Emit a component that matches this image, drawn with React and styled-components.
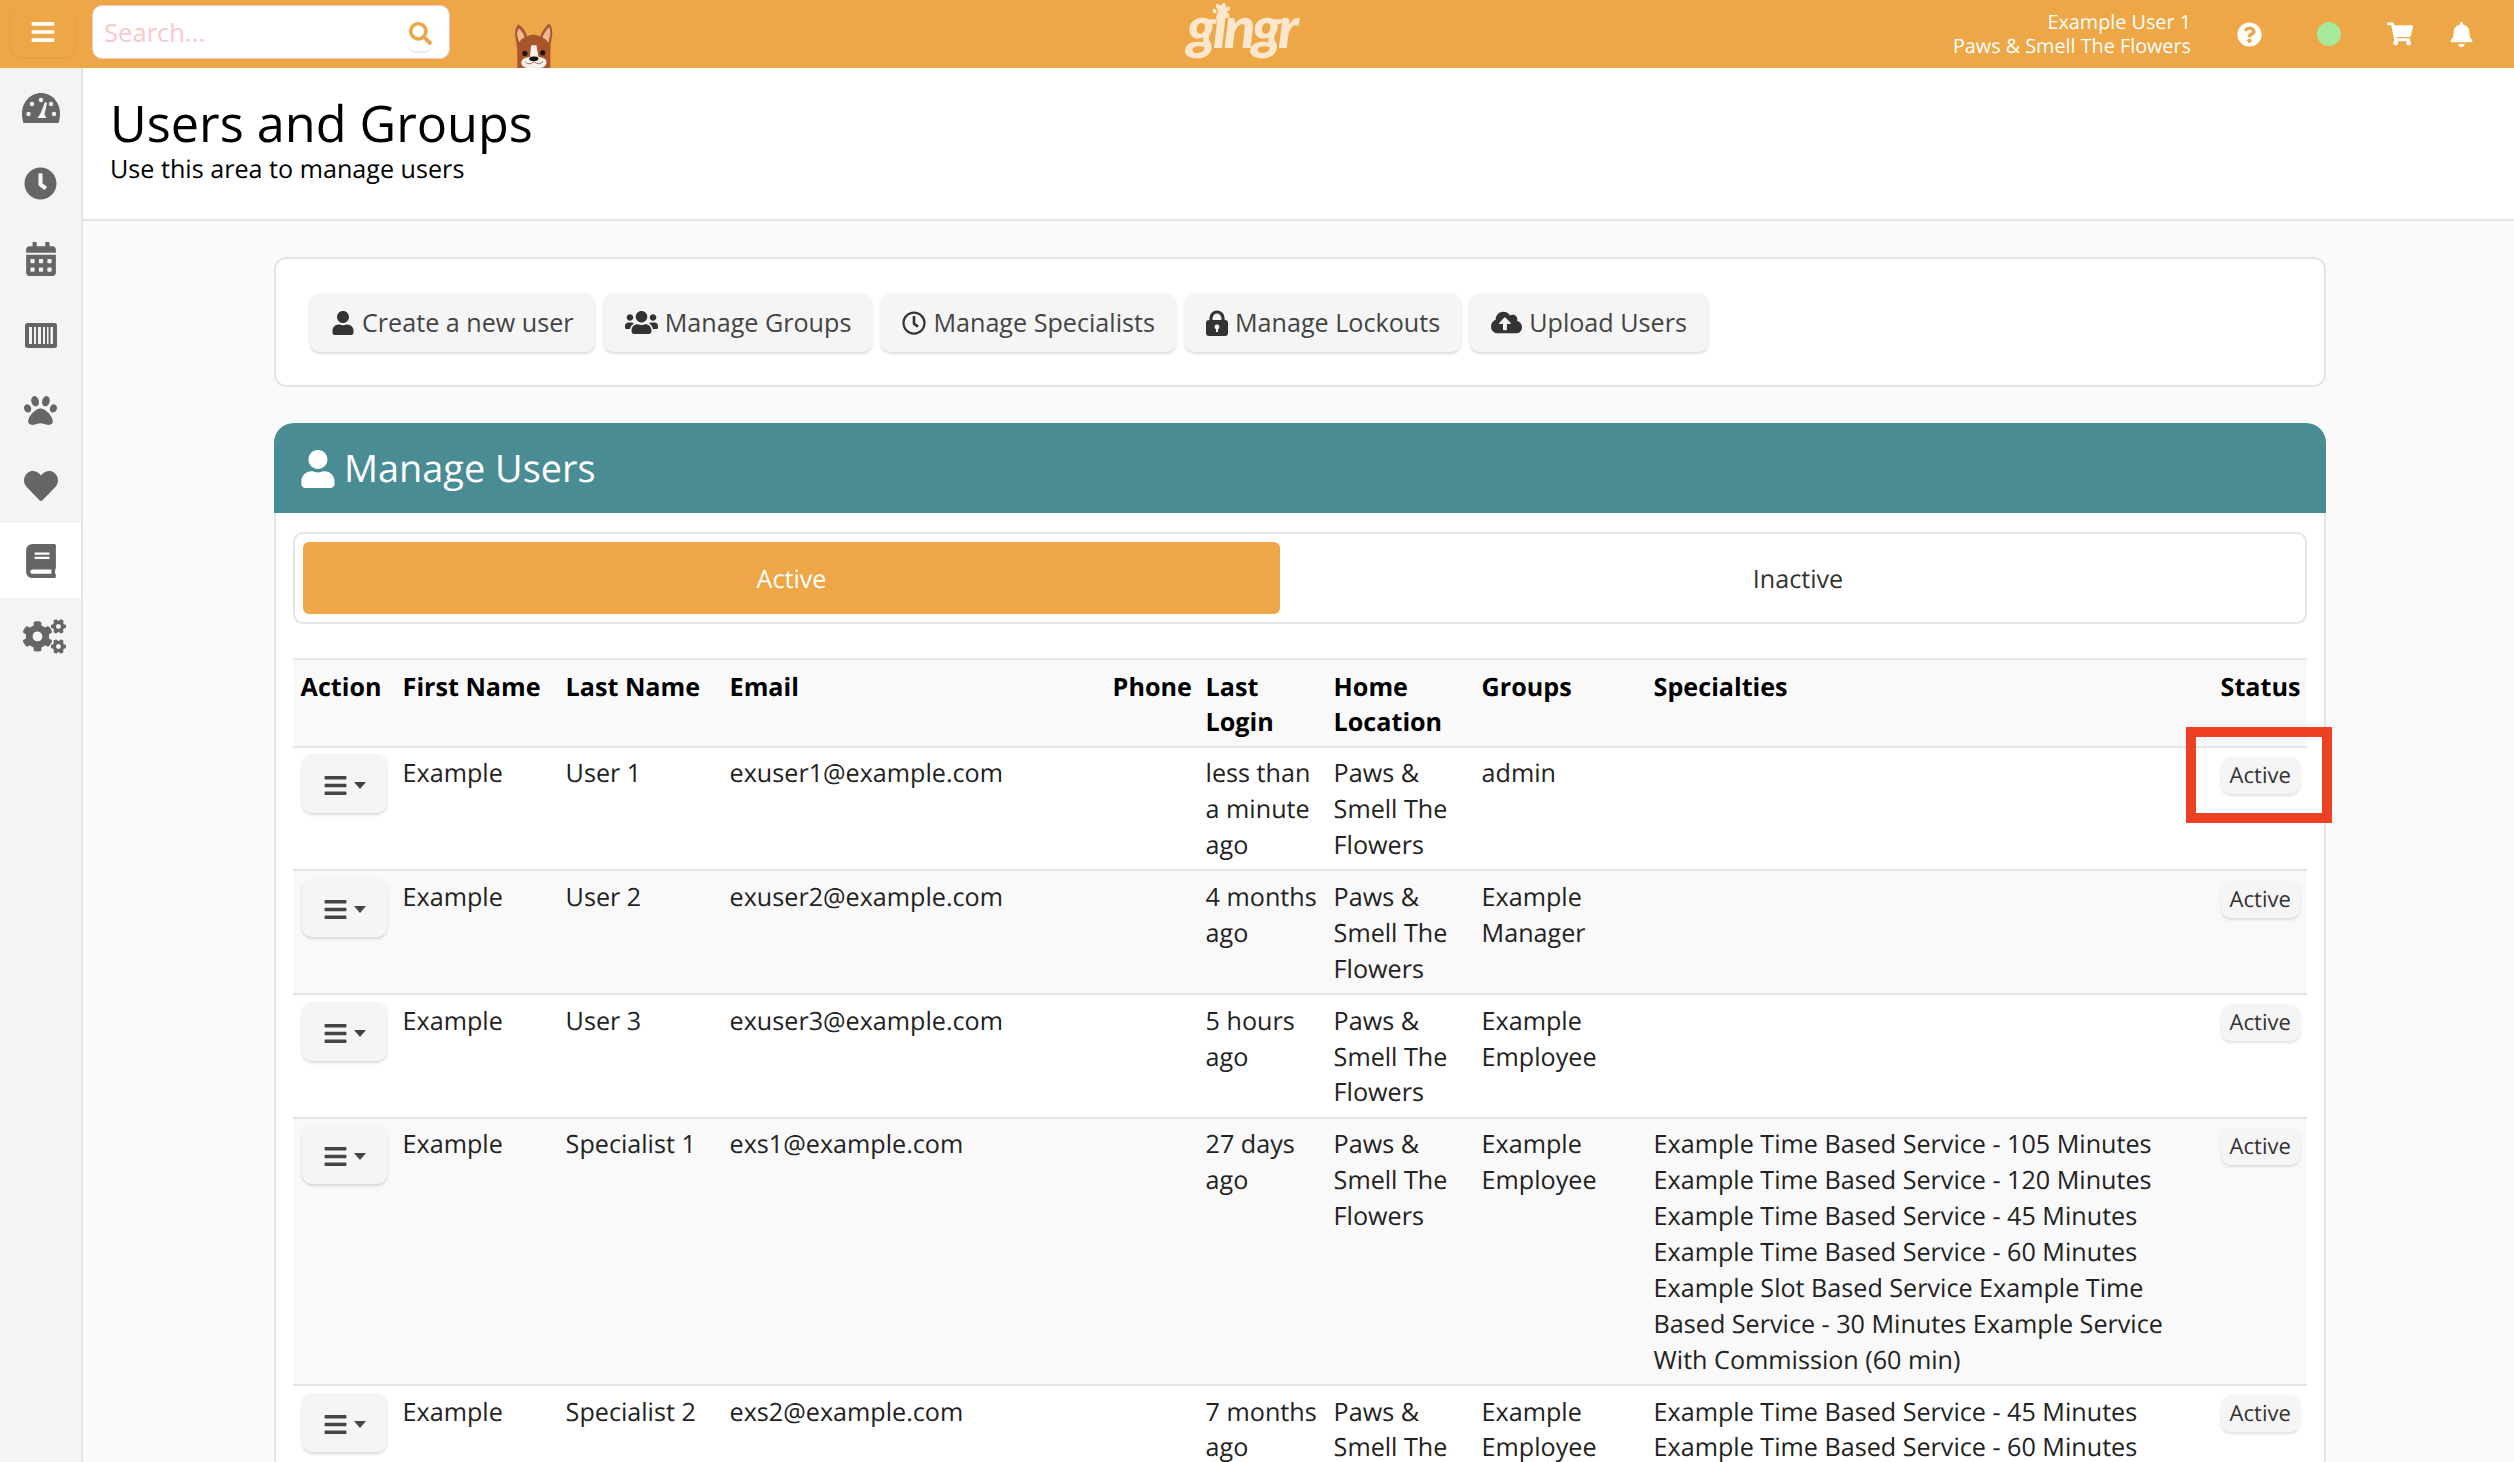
import React from "react";
import styled, { createGlobalStyle } from "styled-components";
import {
  FaBars, FaSearch, FaQuestionCircle, FaShoppingCart, FaBell, FaClock,
  FaCalendarAlt, FaPaw, FaHeart, FaBook, FaCogs, FaUser, FaUsers, FaRegClock, FaCloudUploadAlt,
} from "react-icons/fa";

const ORANGE = "#eda746";

const Global = createGlobalStyle`
  html, body { margin: 0; padding: 0; height: 100%; overflow: hidden; background: #fff; }
  body {
    font-family: "Open Sans", "Noto Sans", sans-serif;
    font-size: 25.15px;
    line-height: 35.84px;
    color: #222;
    text-rendering: geometricPrecision;
  }
  * { box-sizing: border-box; }
`;

const Page = styled.div`
  position: relative;
  width: 2514px;
  height: 1462px;
  overflow: hidden;
  display: flex;
  flex-direction: column;
`;

const TopBar = styled.header`
  flex: none;
  height: 68px;
  background: ${ORANGE};
  display: flex;
  align-items: center;
  padding: 0 40px 0 10px;
  color: #fff;
`;

const MenuButton = styled.button`
  width: 65px;
  height: 51px;
  margin-top: -5px;
  border: 0;
  border-radius: 10px;
  background: ${ORANGE};
  color: #fff;
  display: flex;
  align-items: center;
  justify-content: center;
  box-shadow: 0 1px 3px rgba(0, 0, 0, 0.08);
  font-size: 26px;
  padding: 0;
`;

const SearchBox = styled.div`
  width: 358px;
  height: 54px;
  margin: -4px 0 0 17px;
  background: #fff;
  border: 1.5px solid #f6c6c0;
  border-radius: 10px;
  display: flex;
  align-items: center;
  padding: 0 17px 0 11px;
`;

const SearchInput = styled.input`
  flex: 1;
  min-width: 0;
  border: 0;
  outline: 0;
  background: transparent;
  font: inherit;
  font-size: 25.6px;
  padding: 2px 0 0;
  &::placeholder { color: #f7c9c9; opacity: 1; }
`;

const SearchButton = styled.span`
  width: 24px;
  height: 36px;
  margin-top: 2px;
  display: flex;
  align-items: center;
  justify-content: center;
  color: ${ORANGE};
  font-size: 23px;
  border-radius: 8px;
  box-shadow: 0 1.5px 1px rgba(0, 0, 0, 0.08);
`;

const Dog = styled.svg`
  flex: none;
  align-self: flex-end;
  width: 38px;
  height: 45px;
  margin-left: 65px;
`;

const LogoWrap = styled.div`
  position: relative;
  flex: none;
  width: 119px;
  height: 68px;
  margin-left: 630px;
  color: #fbe7cc;
`;

const LogoText = styled.span`
  display: block;
  font-family: "Lato", "Open Sans", sans-serif;
  font-style: italic;
  font-weight: 900;
  font-size: 58px;
  line-height: 68px;
  letter-spacing: -3.5px;
  margin: -7px 0 0 -3px;
  text-align: center;
  white-space: nowrap;
`;

const LogoPaw = styled.span`
  position: absolute;
  left: 30px;
  top: 2px;
  font-size: 18px;
  line-height: 18px;
  transform: rotate(-10deg);
  z-index: 1;
`;

const Spacer = styled.div`flex: 1;`;

const UserBlock = styled.div`
  text-align: right;
  font-size: 19.8px;
  line-height: 24px;
  margin: 0 -2px 0 0;
`;

const UserLine = styled.div`white-space: nowrap;`;

const TopIcon = styled.span`
  flex: none;
  display: flex;
  margin-left: ${(p) => p.$gap}px;
  font-size: ${(p) => p.$size}px;
  color: #fff;
`;

const StatusDot = styled.span`
  flex: none;
  width: 24px;
  height: 24px;
  border-radius: 50%;
  margin-left: 55px;
  background: #a7e99a;
`;

const Body = styled.div`
  flex: 1;
  min-height: 0;
  display: flex;
`;

const Sidebar = styled.nav`
  flex: none;
  width: 83px;
  background: #f4f4f4;
  border-right: 2px solid #e4e4e4;
  padding-top: 3px;
`;

const NavItem = styled.div`
  height: 75.3px;
  display: flex;
  align-items: center;
  justify-content: center;
  color: #666;
  font-size: ${(p) => p.$size || 34}px;
  padding-left: ${(p) => p.$shift || 0}px;
  padding-bottom: ${(p) => p.$lift || 0}px;
  padding-top: ${(p) => p.$drop || 0}px;
  background: ${(p) => (p.$active ? "#fff" : "transparent")};
`;

const Main = styled.main`
  flex: 1;
  min-width: 0;
  background: #fafafa;
`;

const PageHead = styled.div`
  height: 153px;
  background: #fff;
  border-bottom: 2px solid #e4e4e4;
  padding: 24px 0 0 27px;
`;

const Title = styled.h1`
  margin: 0;
  font-size: 50.4px;
  line-height: 61.44px;
  font-weight: 400;
  color: #000;
`;

const SubTitle = styled.div`
  margin-top: -1px;
  color: #000;
`;

const Content = styled.div`
  padding: 36px 188px 0 191px;
  display: flex;
  flex-direction: column;
  gap: 36px;
`;

const ActionCard = styled.section`
  height: 130px;
  background: #fff;
  border: 2px solid #e4e4e4;
  border-radius: 12px;
  padding: 34px 34px;
  display: flex;
  gap: 9px;
`;

const SoftButton = styled.button`
  flex: none;
  height: 59px;
  padding: 0 21px;
  border: 0;
  border-radius: 10px;
  background: #f5f5f5;
  color: #444;
  font: inherit;
  display: flex;
  align-items: center;
  gap: 7px;
  box-shadow: 0 2px 3px rgba(0, 0, 0, 0.14);
  svg { color: #333; font-size: ${(p) => p.$icon || 24}px; }
`;

const Panel = styled.section`
  background: #fff;
  border: 2px solid #e4e4e4;
  border-top: 0;
  border-radius: 20px 20px 0 0;
`;

const PanelHead = styled.div`
  height: 90px;
  margin: 0 -2px;
  background: #4a8c93;
  color: #fff;
  border-radius: 20px 20px 0 0;
  display: flex;
  align-items: center;
  gap: 7px;
  padding: 2px 0 0 25px;
  font-size: 37.9px;
`;

const PanelBody = styled.div`
  padding: 19px 17px 0;
`;

const Tabs = styled.div`
  height: 92px;
  border: 2px solid #e4e4e4;
  border-radius: 10px;
  padding: 8px;
  display: grid;
  grid-template-columns: 977px 1fr;
  column-gap: 19px;
`;

const Tab = styled.div`
  display: flex;
  align-items: center;
  justify-content: center;
  padding-top: 3px;
  border-radius: 6px;
  background: ${(p) => (p.$active ? ORANGE : "transparent")};
  color: ${(p) => (p.$active ? "#fff" : "#333")};
`;

const Table = styled.table`
  width: 100%;
  margin-top: 34px;
  table-layout: fixed;
  border-collapse: separate;
  border-spacing: 0;
`;

const Th = styled.th`
  padding: 9.5px 7.4px 4.5px 7.6px;
  font-weight: 700;
  color: #000;
  text-align: ${(p) => p.$align || "left"};
  vertical-align: top;
  background: #f9f9f9;
  border-top: 2px solid #e4e4e4;
`;

const Row = styled.tr`
  background: ${(p) => (p.$odd ? "#fff" : "#f9f9f9")};
`;

const Td = styled.td`
  padding: 8.6px 7.4px 5.6px 7.6px;
  vertical-align: top;
  text-align: ${(p) => p.$align || "left"};
  border-top: 2px solid #e4e4e4;
`;

const ActionButton = styled.button`
  width: 85px;
  height: 59px;
  margin: -2px 0 0 1px;
  padding: 4px 0 0;
  border: 0;
  border-radius: 10px;
  background: #f5f5f5;
  color: #444;
  display: flex;
  align-items: center;
  justify-content: center;
  gap: 6px;
  font-size: 25px;
  box-shadow: 0 2px 3px rgba(0, 0, 0, 0.14);
`;

const Caret = styled.span`
  width: 0;
  height: 0;
  border-left: 6.5px solid transparent;
  border-right: 6.5px solid transparent;
  border-top: 7px solid #444;
`;

const StatusBadge = styled.span`
  display: inline-block;
  height: 37px;
  margin-top: 0.5px;
  padding: 0 9px;
  border-radius: 10px;
  background: #f5f5f5;
  color: #333;
  font-size: 22px;
  line-height: 37px;
  box-shadow: 0 2px 3px rgba(0, 0, 0, 0.12);
`;

const ServiceLine = styled.div``;

const Highlight = styled.div`
  position: absolute;
  left: 2186px;
  top: 727px;
  width: 146px;
  height: 96px;
  border: 10px solid #ee4124;
  pointer-events: none;
`;

const GaugeIcon = () => (
  <svg width="38" height="30" viewBox="0 0 38 30">
    <path d="M1.5 30C.5 27 0 24 0 20.5 0 9 8.5 0 19 0s19 9 19 20.5c0 3.5-.5 6.5-1.500 9.500Z" fill="#666" />
    <g fill="#f4f4f4">
      <circle cx="10" cy="11" r="2.2" />
      <circle cx="19" cy="7" r="2.2" />
      <circle cx="29" cy="11" r="2.2" />
      <circle cx="6.500" cy="21" r="2.2" />
      <circle cx="32" cy="21" r="2.2" />
      <path d="M23 9 25 10 22.500 21.500 24.500 25H15.500L18.500 20.500Z" />
    </g>
  </svg>
);

const LockIcon = () => (
  <svg width="22" height="26" viewBox="0 0 22 26">
    <path d="M5 11V8a6 6 0 0 1 12 0v3" fill="none" stroke="#333" strokeWidth="3.2" />
    <rect y="10" width="22" height="16" rx="3" fill="#333" />
    <circle cx="11" cy="17" r="2.4" fill="#f5f5f5" />
    <rect x="10" y="17" width="2" height="5" fill="#f5f5f5" />
  </svg>
);

const BarcodeIcon = () => (
  <svg width="32" height="25" viewBox="0 0 32 25">
    <rect width="32" height="25" rx="2.5" fill="#666" />
    <g fill="#f4f4f4">
      <rect x="4" y="4" width="3" height="17" />
      <rect x="9" y="4" width="2" height="17" />
      <rect x="13" y="4" width="3" height="17" />
      <rect x="18" y="4" width="2" height="17" />
      <rect x="22" y="4" width="1.5" height="17" />
      <rect x="25.5" y="4" width="2.5" height="17" />
    </g>
  </svg>
);

const DogFace = () => (
  <Dog viewBox="105 68 115 136">
    <path d="M113 155L105 102Q106 80 115 72Q136 86 143 112Z" fill="#a5583a" />
    <path d="M120 138L111 102Q113 90 117 84Q130 96 134 112Z" fill="#f2b98a" />
    <path d="M210 155L218 98Q217 78 208 69Q190 86 180 110Z" fill="#a5583a" />
    <path d="M204 138L212 100Q212 88 208 80Q194 96 188 110Z" fill="#f2b98a" />
    <path d="M112 204L112 142Q115 112 160 103Q207 112 212 142L212 204Z" fill="#a9552c" />
    <path d="M154 135L170 135L176 170L150 170Z" fill="#f8f0e6" />
    <path d="M124 190Q122 174 150 170L176 170Q204 174 200 190Q196 204 182 204L142 204Q128 204 124 190Z" fill="#f8f0e6" />
    <circle cx="135" cy="160" r="8" fill="#1d1512" />
    <circle cx="189" cy="158" r="8" fill="#1d1512" />
    <ellipse cx="162" cy="176" rx="14" ry="7" fill="#111" />
    <path d="M136 186Q150 198 162 184Q176 198 190 184" fill="none" stroke="#7a5a48" strokeWidth="2.5" />
  </Dog>
);

const Homes = "Paws & Smell The Flowers";

const USERS = [
  { first: "Example", last: "User 1", email: "exuser1@example.com", login: "less than a minute ago", group: "admin", services: [] },
  { first: "Example", last: "User 2", email: "exuser2@example.com", login: "4 months ago", group: "Example Manager", services: [] },
  { first: "Example", last: "User 3", email: "exuser3@example.com", login: "5 hours ago", group: "Example Employee", services: [] },
  {
    first: "Example", last: "Specialist 1", email: "exs1@example.com", login: "27 days ago", group: "Example Employee",
    services: [
      "Example Time Based Service - 105 Minutes",
      "Example Time Based Service - 120 Minutes",
      "Example Time Based Service - 45 Minutes",
      "Example Time Based Service - 60 Minutes",
      "Example Slot Based Service Example Time Based Service - 30 Minutes Example Service With Commission (60 min)",
    ],
  },
  {
    first: "Example", last: "Specialist 2", email: "exs2@example.com", login: "7 months ago", group: "Example Employee",
    services: ["Example Time Based Service - 45 Minutes", "Example Time Based Service - 60 Minutes"],
  },
];

const COLUMNS = [
  { label: "Action", width: 102 },
  { label: "First Name", width: 163 },
  { label: "Last Name", width: 164 },
  { label: "Email", width: 383 },
  { label: "Phone", width: 93 },
  { label: "Last Login", width: 128 },
  { label: "Home Location", width: 148 },
  { label: "Groups", width: 172 },
  { label: "Specialties", width: 567 },
  { label: "Status", width: 94, align: "right" },
];

export default function App() {
  return (
    <Page>
      <Global />
      <TopBar>
        <MenuButton aria-label="Menu"><FaBars /></MenuButton>
        <SearchBox>
          <SearchInput placeholder="Search..." />
          <SearchButton><FaSearch /></SearchButton>
        </SearchBox>
        <DogFace />
        <LogoWrap>
          <LogoPaw><FaPaw /></LogoPaw>
          <LogoText>gingr</LogoText>
        </LogoWrap>
        <Spacer />
        <UserBlock>
          <UserLine>Example User 1</UserLine>
          <UserLine>Paws &amp; Smell The Flowers</UserLine>
        </UserBlock>
        <TopIcon $gap={48} $size={25}><FaQuestionCircle /></TopIcon>
        <StatusDot />
        <TopIcon $gap={46} $size={26}><FaShoppingCart /></TopIcon>
        <TopIcon $gap={36} $size={25}><FaBell /></TopIcon>
      </TopBar>
      <Body>
        <Sidebar>
          <NavItem $lift={2}><GaugeIcon /></NavItem>
          <NavItem $size={33}><FaClock /></NavItem>
          <NavItem $size={34}><FaCalendarAlt /></NavItem>
          <NavItem $drop={2}><BarcodeIcon /></NavItem>
          <NavItem $size={33} $drop={2}><FaPaw /></NavItem>
          <NavItem $size={34} $drop={2}><FaHeart /></NavItem>
          <NavItem $size={34} $active $drop={2}><FaBook /></NavItem>
          <NavItem $size={43} $shift={7} $drop={2}><FaCogs /></NavItem>
        </Sidebar>
        <Main>
          <PageHead>
            <Title>Users and Groups</Title>
            <SubTitle>Use this area to manage users</SubTitle>
          </PageHead>
          <Content>
            <ActionCard>
              <SoftButton><FaUser />Create a new user</SoftButton>
              <SoftButton $icon={33}><FaUsers />Manage Groups</SoftButton>
              <SoftButton><FaRegClock />Manage Specialists</SoftButton>
              <SoftButton><LockIcon />Manage Lockouts</SoftButton>
              <SoftButton $icon={31}><FaCloudUploadAlt />Upload Users</SoftButton>
            </ActionCard>
            <Panel>
              <PanelHead><FaUser />Manage Users</PanelHead>
              <PanelBody>
                <Tabs>
                  <Tab $active>Active</Tab>
                  <Tab>Inactive</Tab>
                </Tabs>
                <Table>
                  <colgroup>
                    {COLUMNS.map((c) => <col key={c.label} style={{ width: c.width }} />)}
                  </colgroup>
                  <thead>
                    <tr>
                      {COLUMNS.map((c) => <Th key={c.label} $align={c.align}>{c.label}</Th>)}
                    </tr>
                  </thead>
                  <tbody>
                    {USERS.map((u, i) => (
                      <Row key={u.email} $odd={i % 2 === 0}>
                        <Td><ActionButton aria-label="Actions"><FaBars /><Caret /></ActionButton></Td>
                        <Td>{u.first}</Td>
                        <Td>{u.last}</Td>
                        <Td>{u.email}</Td>
                        <Td />
                        <Td>{u.login}</Td>
                        <Td>{Homes}</Td>
                        <Td>{u.group}</Td>
                        <Td>{u.services.map((s) => <ServiceLine key={s}>{s}</ServiceLine>)}</Td>
                        <Td $align="right"><StatusBadge>Active</StatusBadge></Td>
                      </Row>
                    ))}
                  </tbody>
                </Table>
              </PanelBody>
            </Panel>
          </Content>
        </Main>
      </Body>
      <Highlight />
    </Page>
  );
}
